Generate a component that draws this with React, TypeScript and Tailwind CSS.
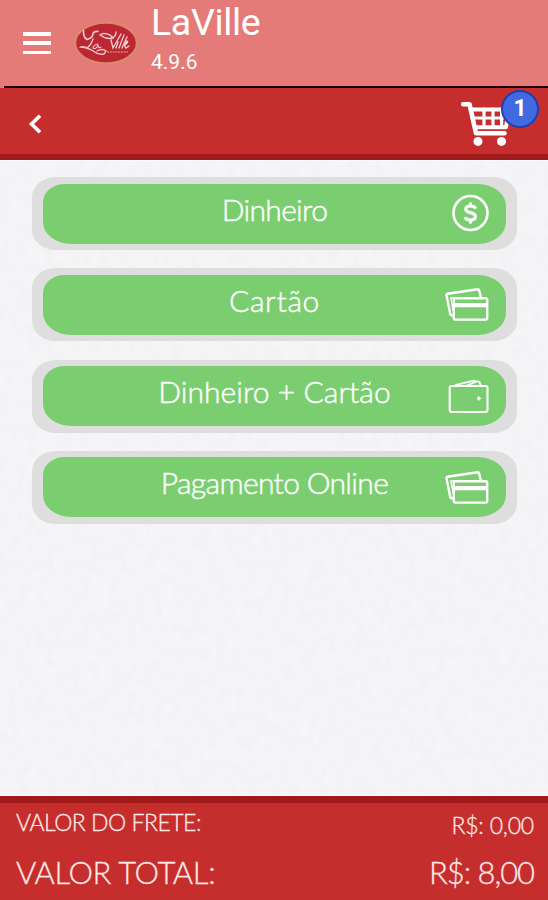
import { ReactNode } from 'react'

const CardsIcon = () => (
  <svg width="44" height="34" viewBox="0 0 44 34" fill="none" stroke="white" strokeWidth="2.4" strokeLinejoin="round">
    <path d="M8 28.5 L5.4 27.8 L1.5 8.2 Q1.3 7 2.6 6.7 L32.5 2.3 Q33.8 2.2 34.2 3.5 L35.8 10.5" />
    <path d="M8.4 24 L5.8 10.9 L10 10.6" strokeWidth="1.4" />
    <rect x="8.8" y="11.2" width="33.4" height="21.4" rx="1.5" />
    <path d="M9 18.2 H42" strokeWidth="4.2" />
  </svg>
)

const MoneyIcon = () => (
  <svg width="44" height="38" viewBox="0 0 44 38" fill="none" stroke="white">
    <circle cx="25.5" cy="19" r="17" strokeWidth="2.6" />
    <path d="M30.7 14.6 C29.5 12.2 27.5 12 25.5 12 C22.5 12 20.8 13.2 20.8 15.2 C20.8 20 30.4 17.2 30.4 22.5 C30.4 25 28.4 26 25.4 26 C22.6 26 20.8 25.4 20 23.2" strokeWidth="3.2" />
    <path d="M25.5 8.6 V12 M25.5 26 V29.6" strokeWidth="3" />
  </svg>
)

const WalletIcon = () => (
  <svg width="44" height="36" viewBox="0 0 44 36" fill="none" stroke="white" strokeWidth="2.1" strokeLinejoin="round">
    <rect x="4.7" y="8" width="37.8" height="26" rx="2" />
    <path d="M10 7.2 L25.5 3.4 L29 2.6 L31.5 3.4 L34.5 3.8 L35.5 7.4 M22 7.4 L31 3.8" strokeWidth="1.7" />
    <path d="M33.8 18.4 L35.8 20.4 L33.8 22.4 L32.2 20.4 Z" fill="white" strokeWidth="0.8" />
  </svg>
)

const Logo = () => (
  <svg width="66" height="46" viewBox="0 0 66 46" fill="none">
    <ellipse cx="33" cy="23" rx="31" ry="20.4" fill="#bd2733" stroke="#d98a6c" strokeWidth="2.4" />
    <g stroke="#f1c9ca" strokeWidth="1.1" strokeLinecap="round">
      <path d="M10.5 10.5 Q10 17 14 19.5 Q20 18 20 13.5 Q21 11 25 11.5" strokeWidth="1.7" />
      <path d="M27 15 Q30 12 37 15 L40 18 Q34 20 27 15 M38 18 Q43 17 43 12" strokeWidth="1.4" />
      <path d="M20 19 Q18 25 14 28 Q10 26 8 27 Q16 28 20 31 Q25 35 31 34 L33 31 Q29 28 24 31" strokeWidth="1.4" />
      <path d="M25 24 Q20 25 20 28 Q23 30 25 25 Q25 29 28 27" />
      <path d="M38 20 L40 28 L48 14 M45 22 L43 28 M51 15 L46 28 M54 17 L49 28 M52 25 Q56 22 54 21 Q50 25 53 28 L56 26" strokeWidth="1.4" />
    </g>
    <path d="M34 32 H55" stroke="#d06c4c" strokeWidth="1.8" strokeDasharray="2 0.8" />
  </svg>
)

const CartIcon = () => (
  <svg width="50" height="48" viewBox="0 0 50 48" fill="none" stroke="white" strokeLinejoin="round" strokeLinecap="round">
    <path d="M3.2 4.2 H9.5 L16 33.2 H44.5" strokeWidth="4.6" />
    <path d="M11.5 9.6 H49 L46 27.2 H15" strokeWidth="4" />
    <path d="M13 18 H48 M24 9 V27 M33 9 V27 M41.6 9 V27" strokeWidth="3.2" />
    <circle cx="18" cy="41.4" r="4.5" fill="white" stroke="none" />
    <circle cx="41.5" cy="41.4" r="4.5" fill="white" stroke="none" />
  </svg>
)

type Payment = {
  label: string
  icon: ReactNode
  text: string
}

const payments: Payment[] = [
  { label: 'Dinheiro', icon: <MoneyIcon />, text: 'tracking-[-0.7px]' },
  { label: 'Cartão', icon: <CardsIcon />, text: 'tracking-[0.7px]' },
  { label: 'Dinheiro + Cartão', icon: <WalletIcon />, text: 'tracking-[0.05px]' },
  { label: 'Pagamento Online', icon: <CardsIcon />, text: 'tracking-[-0.65px]' }
]

// Subtle paper grain behind the list
const PaperTexture = () => (
  <svg className="absolute inset-0 h-full w-full" aria-hidden="true">
    <filter id="paper">
      <feTurbulence type="fractalNoise" baseFrequency="0.11 0.08" numOctaves="2" seed="7" />
      <feColorMatrix values="0 0 0 0 0.6  0 0 0 0 0.6  0 0 0 0 0.62  0.18 0 0 0 -0.075" />
    </filter>
    <rect width="100%" height="100%" filter="url(#paper)" />
  </svg>
)

export default function App() {
  return (
    <div className="flex h-[900px] w-[548px] flex-col overflow-hidden bg-[#f5f5f7] font-['Lato',sans-serif] text-white">
      {/* App header */}
      <header className="flex h-[86px] shrink-0 bg-[#e47b78] pl-[23px] font-['Roboto',sans-serif]">
        <div className="mt-8 flex h-[22px] w-7 flex-col justify-between">
          <span className="h-[3.5px] bg-white" />
          <span className="h-[3.5px] bg-white" />
          <span className="h-[3.5px] bg-white" />
        </div>
        <div className="mt-5 ml-[22px]">
          <Logo />
        </div>
        <div className="ml-3">
          <h1 className="mt-[2px] text-[37.5px] leading-[40px] tracking-[-0.35px]">LaVille</h1>
          <p className="mt-[6px] text-[21px] leading-[28px]">4.9.6</p>
        </div>
      </header>
      <div className="flex h-[2px] shrink-0 bg-[#e47b78] pl-1">
        <div className="flex-1 bg-[#1d0303]" />
      </div>

      {/* Navigation bar */}
      <nav className="flex h-[72px] shrink-0 justify-between border-b-[6px] border-[#a11919] bg-[#c62d2d] pr-[9px] pl-7">
        <svg className="mt-[26px]" width="14" height="20" viewBox="0 0 14 20" fill="none" stroke="white" strokeWidth="3.6">
          <path d="M12 1.8 L3.5 10 L12 18.2" />
        </svg>
        <div className="relative h-[60px] w-[79px] pt-3">
          <CartIcon />
          <span className="absolute top-[2px] right-0 flex h-[38px] w-[38px] items-center justify-center rounded-full border-2 border-[#213fae] bg-[#4169e1] font-['Roboto',sans-serif] text-[23px] font-bold">
            1
          </span>
        </div>
      </nav>

      {/* Payment methods */}
      <main className="relative flex-1 overflow-hidden border-y border-white px-8 pt-4">
        <PaperTexture />
        <div className="relative flex w-[485px] flex-col gap-[18.3px]">
          {payments.map((payment) => (
            <div key={payment.label} className="h-[73px] rounded-[24px/20px] bg-[#dedede] px-[11px] pt-[6.5px]">
              <button className="relative flex h-[60px] w-[463px] justify-center rounded-[22px_28px_28px_28px/18px_22px_22px_22px] bg-[#7bce70] pt-[5px]">
                <span className={`text-[30px] leading-[40px] font-light whitespace-pre [-webkit-text-stroke:0.45px_white] ${payment.text}`}>
                  {payment.label}
                </span>
                <span className="absolute top-0 right-[17px] flex h-[59px] items-center">{payment.icon}</span>
              </button>
            </div>
          ))}
        </div>
      </main>

      {/* Totals */}
      <footer className="flex h-[104px] shrink-0 flex-col border-t-[7px] border-[#a11919] bg-[#c62d2d] pr-[14px] pl-4 font-light text-[#ffe9e6] [-webkit-text-stroke:0.3px_#ffe9e6]">
        <div className="flex h-[42px] justify-between pt-[3px] text-[23px] leading-[32px]">
          <span className="tracking-[-0.5px]">VALOR DO FRETE:</span>
          <span className="mt-[3px] tracking-[-0.2px]">R$: 0,00</span>
        </div>
        <div className="flex justify-between pt-[2px] text-[31px] leading-[58px]">
          <span className="tracking-[-0.35px]">VALOR TOTAL:</span>
          <span className="tracking-[-1.05px]">R$: 8,00</span>
        </div>
      </footer>
    </div>
  )
}
